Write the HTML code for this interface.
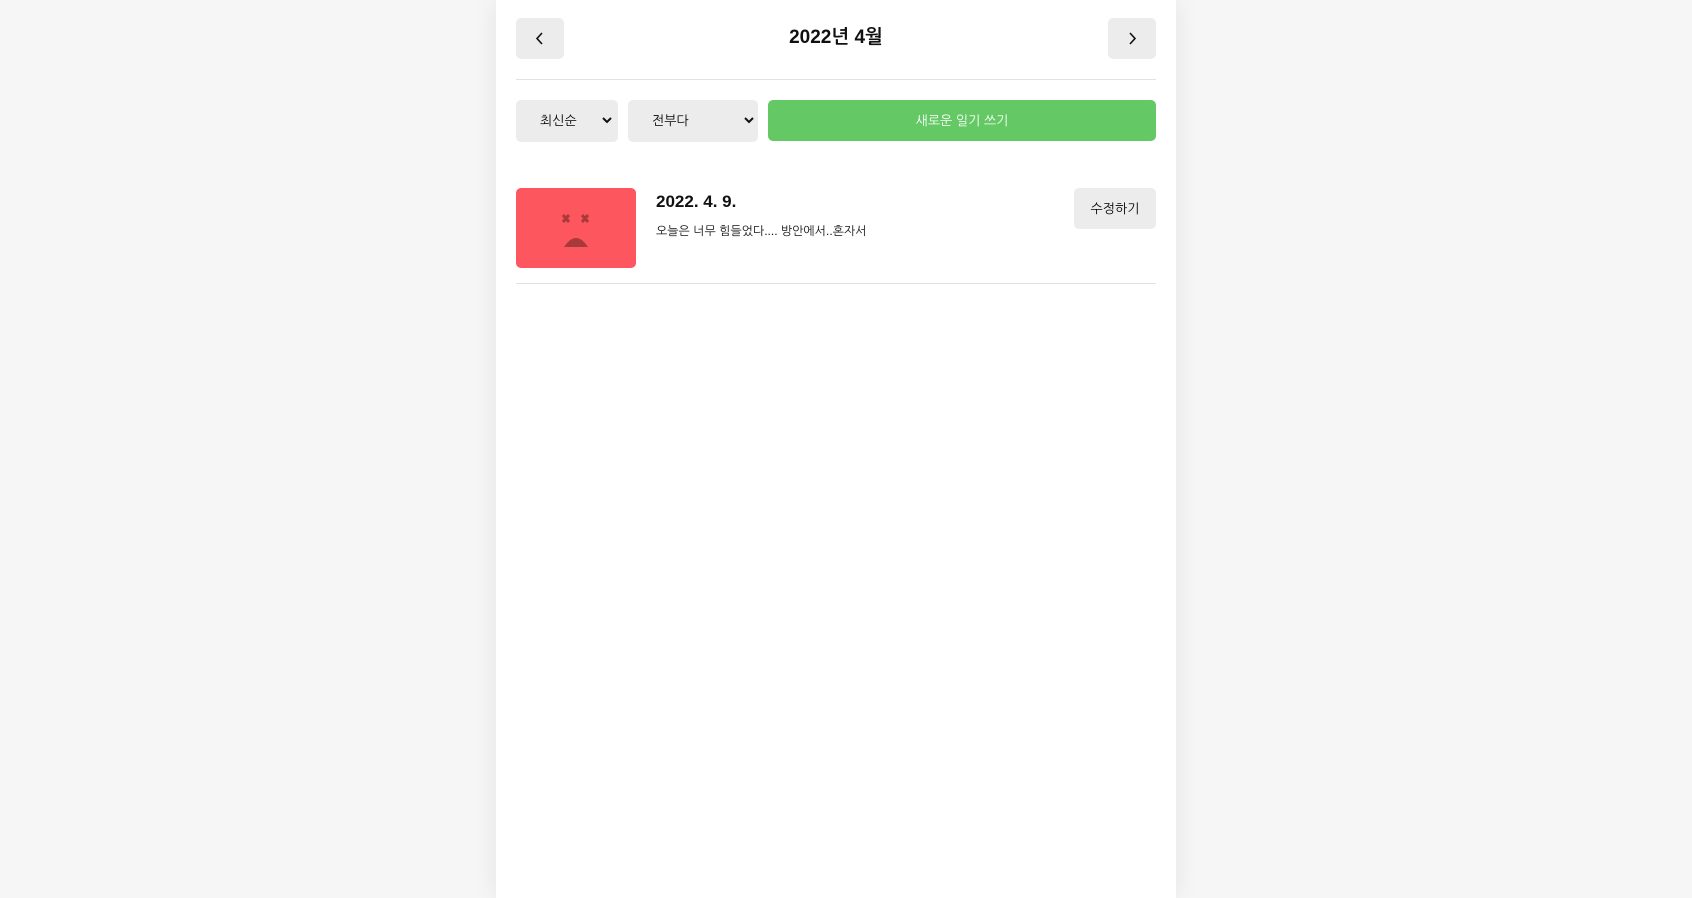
<!DOCTYPE html>
<html><head><meta charset="utf-8"><style>
body{margin:0;background:#f6f6f6;font-family:"Liberation Sans","NanumGothic","Noto Sans CJK KR",sans-serif;}
.c{position:absolute;left:496px;top:0;width:680px;height:898px;background:#fff;box-shadow:0 0 24px rgba(0,0,0,0.08);}
.a{position:absolute;}
.btn{background:#ececec;border-radius:5px;}
</style></head><body>
<div class="c">
 <div class="a btn" style="left:20px;top:18px;width:48px;height:41px"><svg width="48" height="41"><path d="M26 15l-5 5.5 5 5.5" stroke="#111" stroke-width="1.6" fill="none"/></svg></div>
 <div class="a" style="left:0;width:680px;top:27px;text-align:center;font-size:19px;font-weight:bold;color:#111">2022년 4월</div>
 <div class="a btn" style="left:612px;top:18px;width:48px;height:41px"><svg width="48" height="41"><path d="M22 15l5 5.5-5 5.5" stroke="#111" stroke-width="1.6" fill="none"/></svg></div>
 <div class="a" style="left:20px;top:79px;width:640px;height:1px;background:#e2e2e2"></div>
 <div class="a btn" style="left:20px;top:100px;width:102px;height:42px;font-size:13px;line-height:42px"><span style="margin-left:24px">최신순</span><svg class="a" style="right:6px;top:17px" width="10" height="8"><path d="M1 1l4 4 4-4" stroke="#111" stroke-width="2" fill="none"/></svg></div>
 <div class="a btn" style="left:132px;top:100px;width:130px;height:42px;font-size:13px;line-height:42px"><span style="margin-left:24px">전부다</span><svg class="a" style="right:4px;top:17px" width="10" height="8"><path d="M1 1l4 4 4-4" stroke="#111" stroke-width="2" fill="none"/></svg></div>
 <div class="a" style="left:272px;top:100px;width:388px;height:41px;background:#64c964;border-radius:5px;color:#fff;font-size:13px;line-height:41px;text-align:center">새로운 일기 쓰기</div>
 <div class="a" style="left:20px;top:188px;width:120px;height:80px;background:#fd565f;border-radius:5px">
  <svg width="120" height="80"><g stroke="#a83a3a" stroke-width="3"><path d="M47 27l6 7M53 27l-6 7M66 27l6 7M72 27l-6 7"/></g><path d="M48 59q12-18 24 0z" fill="#a83a3a"/></svg>
 </div>
 <div class="a" style="left:160px;top:192px;font-size:17px;font-weight:bold;color:#111">2022. 4. 9.</div>
 <div class="a" style="left:160px;top:224px;font-size:12px;color:#111">오늘은 너무 힘들었다.... 방안에서..혼자서</div>
 <div class="a btn" style="left:578px;top:188px;width:82px;height:41px;font-size:13px;line-height:41px;text-align:center">수정하기</div>
 <div class="a" style="left:20px;top:283px;width:640px;height:1px;background:#e2e2e2"></div>
</div>
</body></html>
